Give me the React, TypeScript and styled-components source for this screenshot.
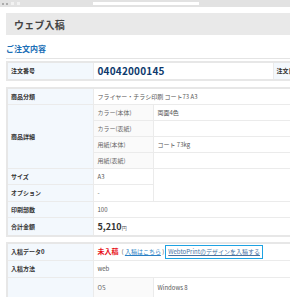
import React from "react";
import styled, { createGlobalStyle } from "styled-components";

const Global = createGlobalStyle`
  html, body {
    margin: 0;
    padding: 0;
    overflow: hidden;
    background: #ffffff;
    font-family: "Noto Sans CJK JP", "Noto Sans", sans-serif;
    color: #555;
  }
`;

const BrowserBar = styled.div`
  height: 7px;
  background: #e2e2e2;
  display: flex;
  align-items: center;
  padding-left: 2px;
  gap: 2px;
`;

const Dot = styled.span<{ $light?: boolean }>`
  width: ${(p) => (p.$light ? 3 : 2)}px;
  height: ${(p) => (p.$light ? 3 : 2)}px;
  border-radius: ${(p) => (p.$light ? 0 : 50)}%;
  background: ${(p) => (p.$light ? "#f2f2f2" : "#9a9a9a")};
  margin-left: ${(p) => (p.$light ? 1 : 0)}px;
`;

const Address = styled.span`
  width: 106px;
  height: 3px;
  background: #ffffff;
  margin-left: 71px;
`;

const Content = styled.div`
  padding-left: 6px;
  width: 440px;
`;

const TitleBar = styled.div`
  margin-top: 6px;
  height: 22px;
  background: #e9e9e9;
  display: flex;
  align-items: center;
  padding-left: 8px;
  font-size: 10px;
  font-weight: 700;
  color: #444;
  letter-spacing: 0.2px;
`;

const SectionHeading = styled.div`
  margin-top: 8px;
  line-height: 11px;
  height: 11px;
  font-size: 8px;
  font-weight: 700;
  color: #1b6fb6;
  padding-bottom: 4px;
  border-bottom: 1px solid #e4e4e4;
`;

const Table = styled.table<{ $gap: number }>`
  margin-top: ${(p) => p.$gap}px;
  border-collapse: collapse;
  border: 2px solid #e7e7e7;
  width: 430px;
  table-layout: fixed;
`;

const Label = styled.th<{ $h?: number }>`
  background: #f3f8fd;
  border: 1px solid #ebebeb;
  text-align: left;
  font-size: 6px;
  font-weight: 700;
  color: #333;
  padding: 0 0 0 3px;
  height: ${(p) => p.$h ?? 15}px;
  line-height: 8px;
  white-space: nowrap;
  vertical-align: middle;
`;

const SubLabel = styled.td`
  background: #fafafa;
  border: 1px solid #ebebeb;
  font-size: 6px;
  color: #666;
  padding: 0 0 0 4px;
  line-height: 8px;
  white-space: nowrap;
  vertical-align: middle;
`;

const Value = styled.td<{ $h?: number }>`
  border: 1px solid #ebebeb;
  font-size: 6px;
  color: #555;
  padding: 0 0 0 4px;
  height: ${(p) => p.$h ?? 15}px;
  line-height: 8px;
  white-space: nowrap;
  vertical-align: middle;
`;

const OrderNo = styled.span`
  font-size: 10px;
  line-height: 10px;
  font-weight: 700;
  color: #0e3a6d;
  letter-spacing: 0.2px;
`;

const Price = styled.span`
  font-size: 9px;
  line-height: 9px;
  font-weight: 700;
  color: #333;
`;

const Yen = styled.span`
  font-size: 5px;
  color: #555;
`;

const Red = styled.span`
  color: #e8141c;
  font-weight: 700;
  font-size: 7px;
  margin-right: 3px;
`;

const Paren = styled.span`
  color: #555;
`;

const Link = styled.a`
  color: #2a7fc4;
  text-decoration: underline;
`;

const BoxLink = styled.a`
  display: inline-block;
  margin-left: 1px;
  border: 1px solid #1ea2e2;
  line-height: 12px;
  padding: 0 2px;
  color: #45719f;
  text-decoration: underline;
`;

const Col = styled.col<{ $w: number }>`
  width: ${(p) => p.$w}px;
`;

export default function App() {
  return (
    <>
      <Global />
      <BrowserBar>
        <Dot />
        <Dot />
        <Dot $light />
        <Dot $light />
        <Address />
      </BrowserBar>
      <Content>
        <TitleBar>ウェブ入稿</TitleBar>
        <SectionHeading>ご注文内容</SectionHeading>

        <Table $gap={2}>
          <colgroup>
            <Col $w={86} />
            <Col $w={180} />
            <Col $w={86} />
            <Col $w={78} />
          </colgroup>
          <tbody>
            <tr>
              <Label $h={16}>注文番号</Label>
              <Value $h={16}>
                <OrderNo>04042000145</OrderNo>
              </Value>
              <Label $h={16}>注文日時</Label>
              <Value $h={16}>2015/04/04</Value>
            </tr>
          </tbody>
        </Table>

        <Table $gap={6}>
          <colgroup>
            <Col $w={86} />
            <Col $w={60} />
            <Col $w={284} />
          </colgroup>
          <tbody>
            <tr>
              <Label>商品分類</Label>
              <Value colSpan={2}>フライヤー・チラシ印刷 コート73 A3</Value>
            </tr>
            <tr>
              <Label rowSpan={4}>商品詳細</Label>
              <SubLabel>カラー(本体)</SubLabel>
              <Value>両面4色</Value>
            </tr>
            <tr>
              <SubLabel>カラー(表紙)</SubLabel>
              <Value></Value>
            </tr>
            <tr>
              <SubLabel>用紙(本体)</SubLabel>
              <Value>コート 73kg</Value>
            </tr>
            <tr>
              <SubLabel>用紙(表紙)</SubLabel>
              <Value></Value>
            </tr>
            <tr>
              <Label>サイズ</Label>
              <Value>A3</Value>
              <Value rowSpan={2}></Value>
            </tr>
            <tr>
              <Label $h={16}>オプション</Label>
              <Value $h={16}>-</Value>
            </tr>
            <tr>
              <Label $h={15}>印刷部数</Label>
              <Value $h={15} colSpan={2}>100</Value>
            </tr>
            <tr>
              <Label $h={17}>合計金額</Label>
              <Value $h={17} colSpan={2}>
                <Price>5,210</Price>
                <Yen>円</Yen>
              </Value>
            </tr>
          </tbody>
        </Table>

        <Table $gap={5}>
          <colgroup>
            <Col $w={86} />
            <Col $w={60} />
            <Col $w={284} />
          </colgroup>
          <tbody>
            <tr>
              <Label $h={16}>入稿データ0</Label>
              <Value $h={16} colSpan={2}>
                <Red>未入稿</Red>
                <Paren>( </Paren>
                <Link href="#">入稿はこちら</Link>
                <Paren> )</Paren>
                <BoxLink href="#">WebtoPrintのデザインを入稿する</BoxLink>
              </Value>
            </tr>
            <tr>
              <Label $h={16}>入稿方法</Label>
              <Value $h={16} colSpan={2}>web</Value>
            </tr>
            <tr>
              <Label $h={19}></Label>
              <SubLabel>OS</SubLabel>
              <Value $h={19}>Windows 8</Value>
            </tr>
          </tbody>
        </Table>
      </Content>
    </>
  );
}
